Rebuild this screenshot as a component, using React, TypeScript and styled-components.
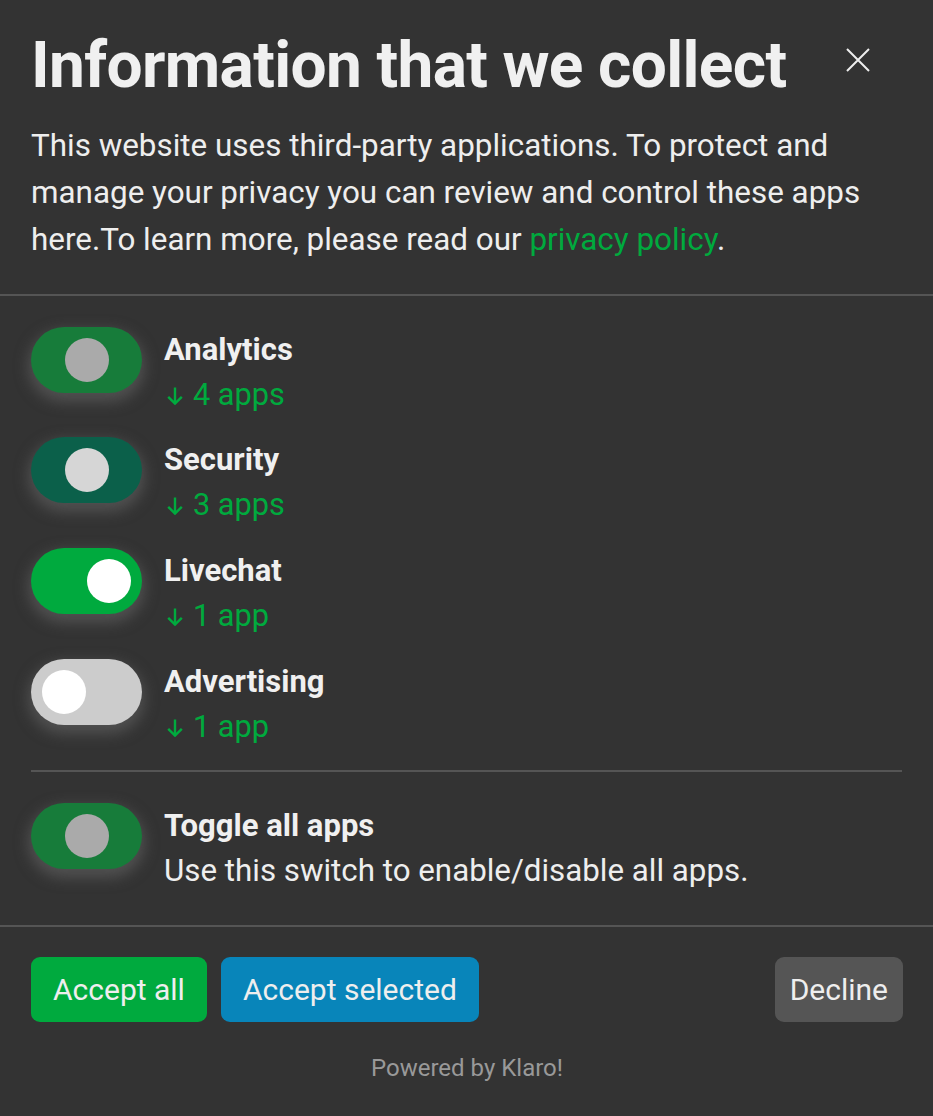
import React from 'react';
import styled, { createGlobalStyle } from 'styled-components';

const GREEN = '#00aa3e';
const BLUE = '#0885ba';
const DARK = '#333333';
const LIGHT = '#eeeeee';

const Global = createGlobalStyle`
  html, body {
    margin: 0;
    padding: 0;
    background: ${DARK};
  }
  * { box-sizing: border-box; }
`;

const Modal = styled.div`
  width: 933px;
  min-height: 1116px;
  background: ${DARK};
  color: ${LIGHT};
  font-family: Roboto, "Liberation Sans", sans-serif;
  display: flex;
  flex-direction: column;
`;

const Header = styled.div`
  padding: 28px 31px 31px 31px;
  border-bottom: 2px solid #555;
`;

const TitleRow = styled.div`
  display: flex;
  align-items: flex-start;
  justify-content: space-between;
`;

const Title = styled.h1`
  margin: 0;
  font-size: 64px;
  line-height: 76.8px;
  font-weight: 700;
  color: #f0f0f0;
  letter-spacing: -0.65px;
`;

const Close = styled.button`
  background: none;
  border: 0;
  padding: 0;
  margin: 20px 32px 0 0;
  width: 24px;
  height: 24px;
  cursor: pointer;
  color: ${LIGHT};
`;

const Intro = styled.p`
  margin: 17px 0 0;
  font-size: 31.4px;
  line-height: 47px;
  font-weight: 400;
  color: ${LIGHT};
`;

const Link = styled.a`
  color: ${GREEN};
  text-decoration: none;
`;

const Content = styled.div`
  padding: 29px 31px 32px;
  border-bottom: 2px solid #555;
`;

const List = styled.ul`
  list-style: none;
  margin: 0;
  padding: 0 0 21px;
  display: flex;
  flex-direction: column;
  gap: 18.6px;
  border-bottom: 2px solid #555;
`;

const ToggleAll = styled.div`
  padding-top: 29px;
`;

const Row = styled.li`
  display: flex;
  align-items: flex-start;
  gap: 22px;
`;

const RowDiv = styled(Row).attrs({ as: 'div' })``;

type SwitchProps = { $track: string; $knob: string; $pos: 'left' | 'mid' | 'right' };

const Track = styled.span<SwitchProps>`
  position: relative;
  flex: none;
  display: block;
  width: 111px;
  height: 66px;
  margin-top: 2px;
  border-radius: 33px;
  background: ${(p) => p.$track};
  box-shadow: 0 6px 14px 3px rgba(110, 110, 110, 0.5);

  &::after {
    content: '';
    position: absolute;
    top: 11px;
    left: ${(p) => (p.$pos === 'left' ? '11px' : p.$pos === 'mid' ? '33.5px' : '56px')};
    width: 44px;
    height: 44px;
    border-radius: 50%;
    background: ${(p) => p.$knob};
  }
`;

const Text = styled.div`
  display: flex;
  flex-direction: column;
  padding-top: 2px;
`;

const AppTitle = styled.span`
  font-size: 31px;
  line-height: 45px;
  font-weight: 700;
  color: #f0f0f0;
`;

const AppCount = styled.span`
  display: flex;
  align-items: baseline;
  font-size: 30.7px;
  line-height: 45px;
  color: ${GREEN};
`;

const Arrow = styled.svg`
  flex: none;
  width: 16px;
  height: 18px;
  margin: 0 10px 1.5px 3px;
`;

const AppDesc = styled.span`
  font-size: 31.3px;
  line-height: 45px;
  color: ${LIGHT};
`;

const Footer = styled.div`
  padding: 30px 30px 0 31px;
  display: flex;
  flex-direction: column;
`;

const Buttons = styled.div`
  display: flex;
  align-items: center;
  gap: 14px;
`;

const Button = styled.button<{ $bg: string; $push?: boolean }>`
  height: 65px;
  padding: 0 ${(p) => (p.$push ? '15px' : '22px')};
  border: 0;
  border-radius: 9px;
  background: ${(p) => p.$bg};
  color: ${LIGHT};
  font-family: Roboto, "Liberation Sans", sans-serif;
  font-size: 30px;
  font-weight: 400;
  cursor: pointer;
  margin-left: ${(p) => (p.$push ? 'auto' : '0')};
`;

const Powered = styled.a`
  align-self: center;
  margin-top: 31px;
  font-size: 24px;
  line-height: 30px;
  color: #999;
  text-decoration: none;
`;

const apps = [
  { name: 'Analytics', count: '4 apps', track: '#177c3a', knob: '#aaaaaa', pos: 'mid' as const },
  { name: 'Security', count: '3 apps', track: '#0b604a', knob: '#d6d6d6', pos: 'mid' as const },
  { name: 'Livechat', count: '1 app', track: GREEN, knob: '#ffffff', pos: 'right' as const },
  { name: 'Advertising', count: '1 app', track: '#cccccc', knob: '#ffffff', pos: 'left' as const },
];

export default function App() {
  return (
    <>
      <Global />
      <Modal>
        <Header>
          <TitleRow>
            <Title>Information that we collect</Title>
            <Close aria-label="close">
              <svg width="24" height="24" viewBox="0 0 24 24">
                <path d="M1 1 L23 23 M23 1 L1 23" stroke="currentColor" strokeWidth="2" fill="none" />
              </svg>
            </Close>
          </TitleRow>
          <Intro>
            This website uses third-party applications. To protect and manage your privacy you can review and
            control these apps here.To learn more, please read our <Link href="#">privacy policy</Link>.
          </Intro>
        </Header>
        <Content>
          <List>
            {apps.map((a) => (
              <Row key={a.name}>
                <Track $track={a.track} $knob={a.knob} $pos={a.pos} />
                <Text>
                  <AppTitle>{a.name}</AppTitle>
                  <AppCount>
                    <Arrow viewBox="0 0 16 18">
                      <path
                        d="M8 0.5 V16.5 M1.2 9.8 L8 16.6 L14.8 9.8"
                        stroke="currentColor"
                        strokeWidth="2.4"
                        fill="none"
                      />
                    </Arrow>
                    {a.count}
                  </AppCount>
                </Text>
              </Row>
            ))}
          </List>
          <ToggleAll>
            <RowDiv>
              <Track $track="#177c3a" $knob="#aaaaaa" $pos="mid" />
              <Text>
                <AppTitle>Toggle all apps</AppTitle>
                <AppDesc>Use this switch to enable/disable all apps.</AppDesc>
              </Text>
            </RowDiv>
          </ToggleAll>
        </Content>
        <Footer>
          <Buttons>
            <Button $bg={GREEN}>Accept all</Button>
            <Button $bg={BLUE}>Accept selected</Button>
            <Button $bg="#555555" $push>
              Decline
            </Button>
          </Buttons>
          <Powered href="#">Powered by Klaro!</Powered>
        </Footer>
      </Modal>
    </>
  );
}
